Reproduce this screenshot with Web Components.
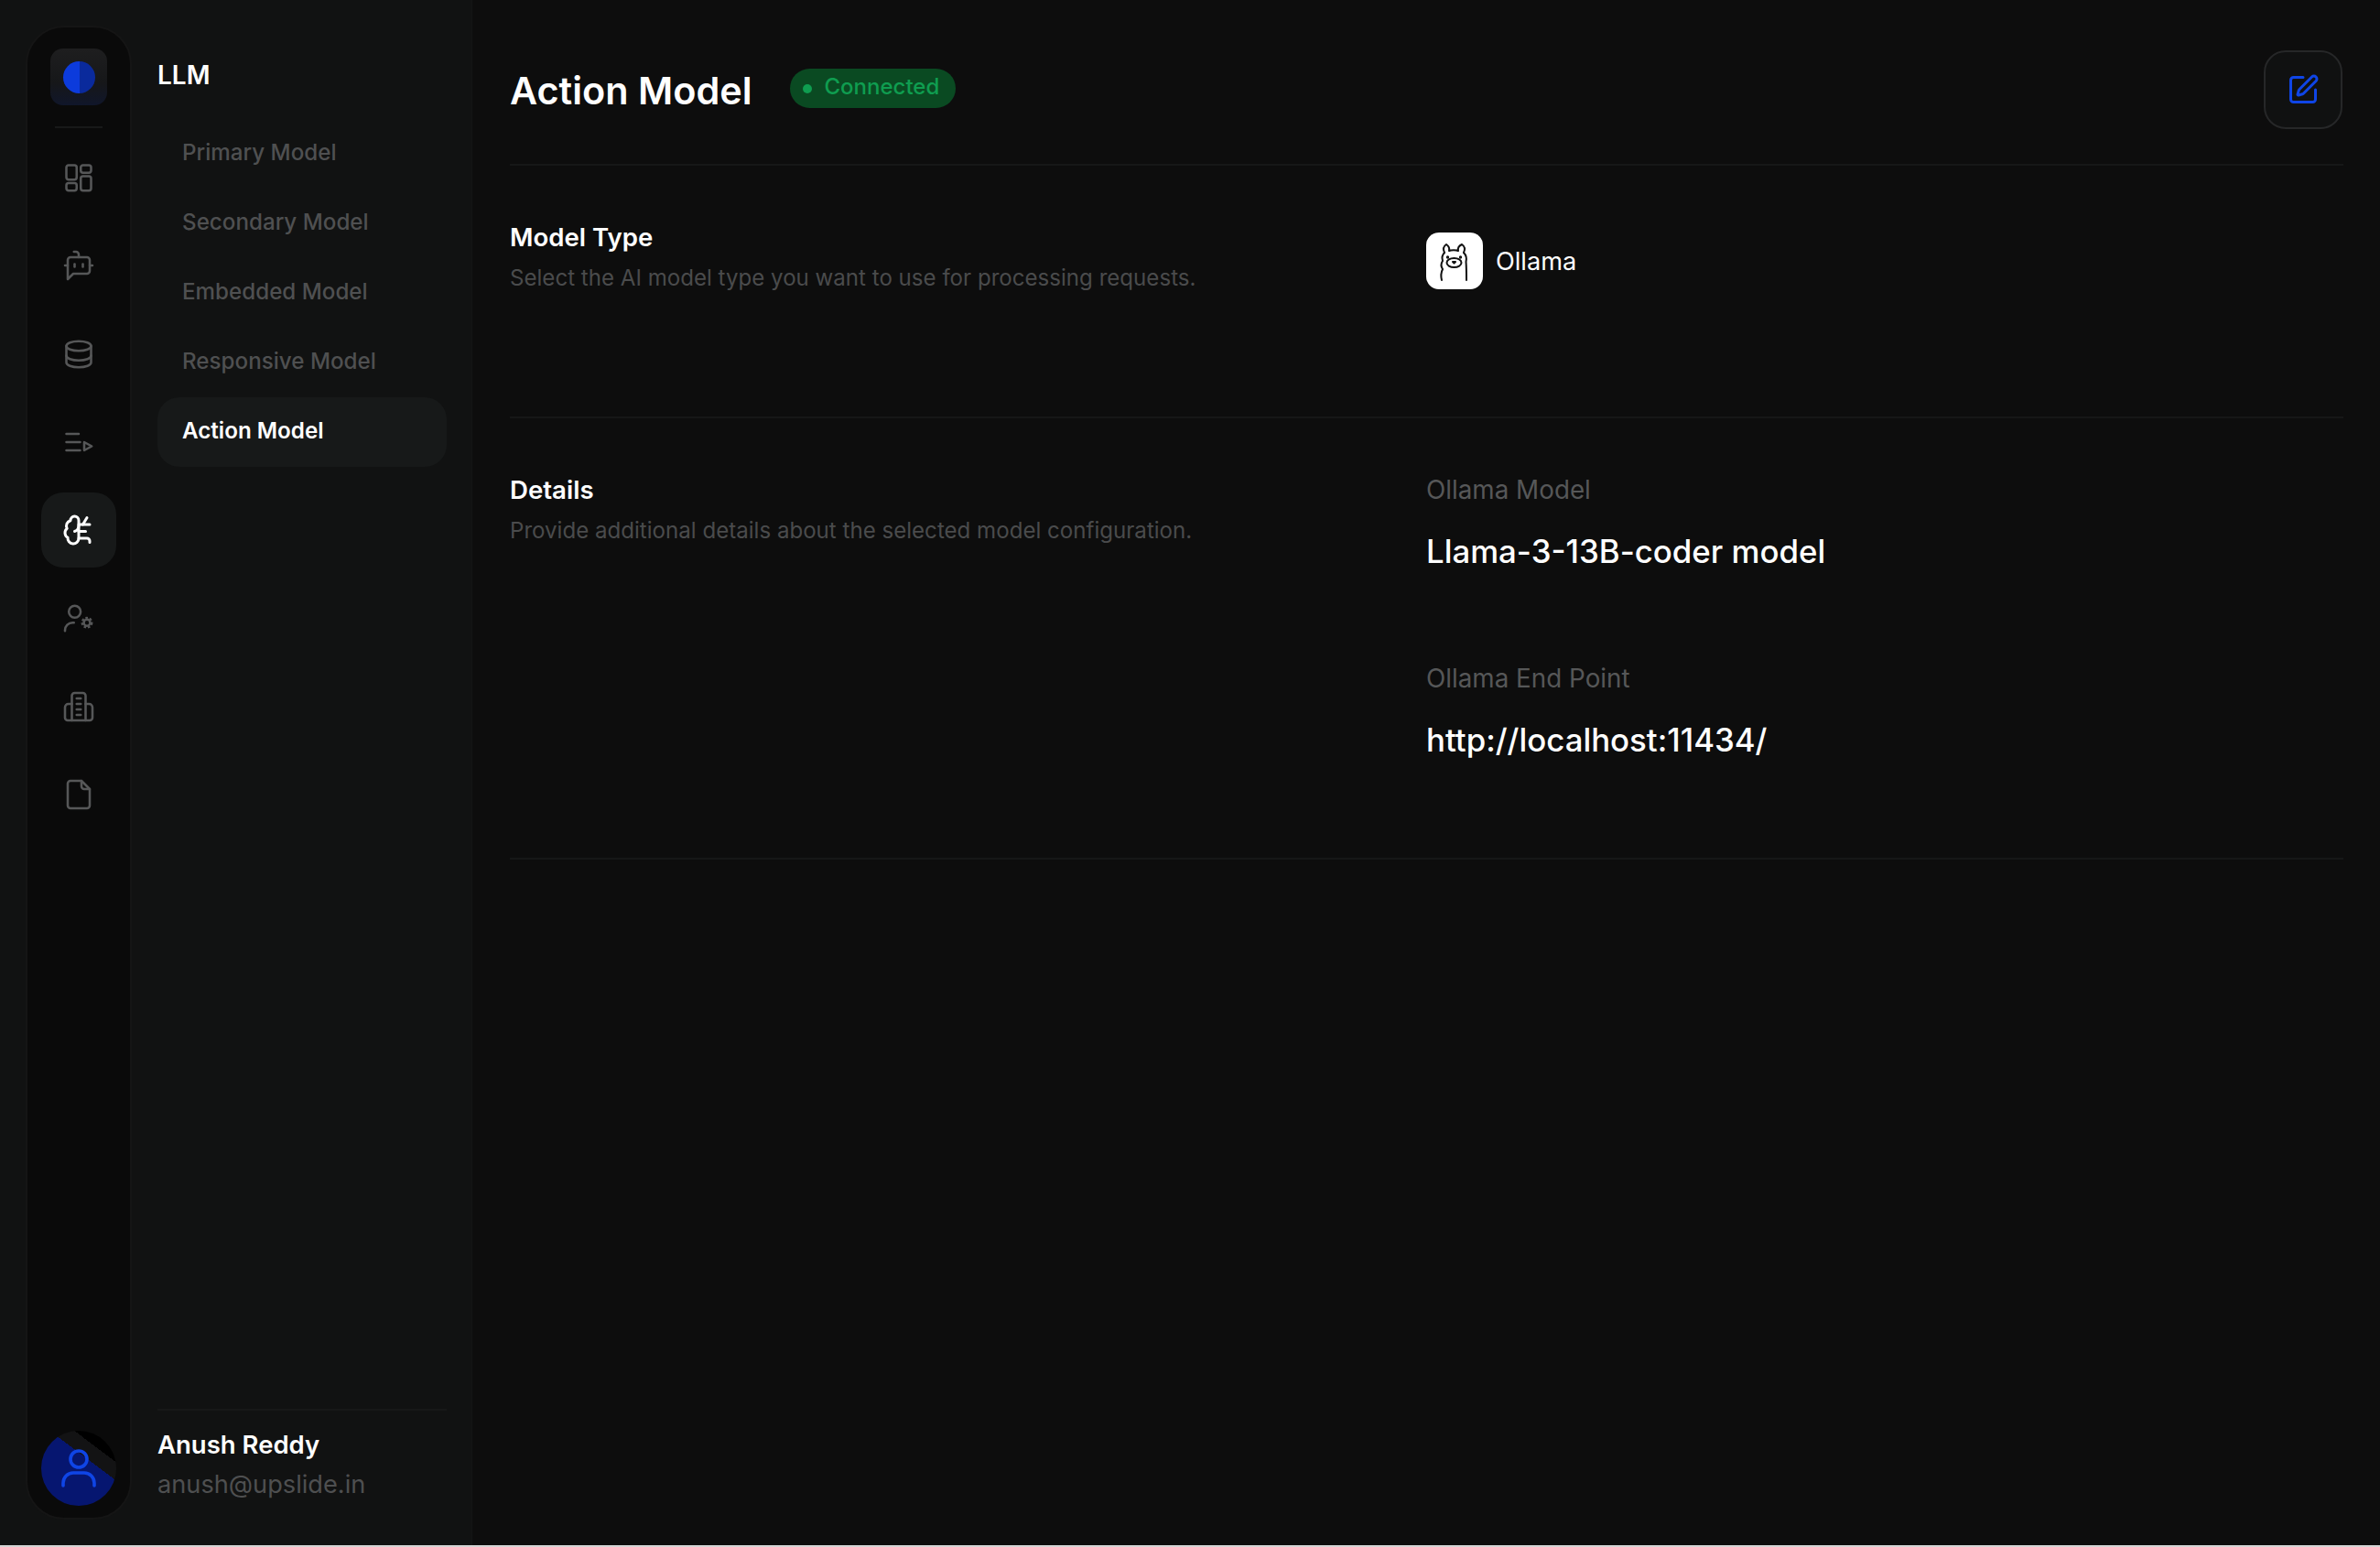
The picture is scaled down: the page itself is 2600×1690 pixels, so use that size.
<!DOCTYPE html>
<html>
<head>
<meta charset="utf-8">
<title>Action Model</title>
<style>
  html, body { margin: 0; height: 100%; background: #0d0d0d; }
  body { font-family: Inter, "Liberation Sans", sans-serif; color: #fff; }
</style>
</head>
<body>
<app-shell>
  <nav-rail slot="rail">
    <rail-item icon="grid"></rail-item>
    <rail-item icon="bot"></rail-item>
    <rail-item icon="database"></rail-item>
    <rail-item icon="list"></rail-item>
    <rail-item icon="brain" active></rail-item>
    <rail-item icon="usercog"></rail-item>
    <rail-item icon="building"></rail-item>
    <rail-item icon="file"></rail-item>
  </nav-rail>
  <sub-nav slot="subnav" heading="LLM" name="Anush Reddy" email="anush@upslide.in">
    <nav-link>Primary Model</nav-link>
    <nav-link>Secondary Model</nav-link>
    <nav-link>Embedded Model</nav-link>
    <nav-link>Responsive Model</nav-link>
    <nav-link active>Action Model</nav-link>
  </sub-nav>
  <page-header heading="Action Model" status="Connected"></page-header>
  <config-section heading="Model Type" desc="Select the AI model type you want to use for processing requests." style="height:276px">
    <model-chip>Ollama</model-chip>
  </config-section>
  <config-section heading="Details" desc="Provide additional details about the selected model configuration." style="height:482px">
    <detail-field label="Ollama Model">Llama-3-13B-coder model</detail-field>
    <detail-field label="Ollama End Point">http://localhost:11434/</detail-field>
  </config-section>
</app-shell>

<script>
const ICONS = {
  grid: '<rect x="3" y="3" width="7.5" height="10.5" rx="1.6"/><rect x="13.5" y="3" width="7.5" height="5.5" rx="1.6"/><rect x="3" y="16" width="7.5" height="5.5" rx="1.6"/><rect x="13.5" y="11" width="7.5" height="10.5" rx="1.6"/>',
  bot: '<path d="M12 6V4a2 2 0 0 0-2-2H8.500"/><path d="m8 18-4 4V8a2 2 0 0 1 2-2h12a2 2 0 0 1 2 2v8a2 2 0 0 1-2 2Z"/><path d="M2 12h2"/><path d="M9 11v2"/><path d="M15 11v2"/><path d="M20 12h2"/>',
  database: '<path d="M3 6c0-2 4-3.500 9-3.500s9 1.500 9 3.500-4 3.500-9 3.500S3 8 3 6Z"/><path d="M3 6v12c0 2 4 3.500 9 3.500s9-1.500 9-3.500V6"/><path d="M3 13c0 2 4 3.500 9 3.500s9-1.500 9-3.500"/>',
  list: '<path d="M3 6h9"/><path d="M3 12h10"/><path d="M3 18h10"/><path d="m16 12 5.500 3-5.500 3Z"/>',
  brain: '<path d="M12 5a3 3 0 1 0-5.997.125 4 4 0 0 0-2.526 5.770 4 4 0 0 0 .556 6.588A4 4 0 1 0 12 18Z"/><path d="M9 13a4.500 4.500 0 0 0 3-4"/><path d="M12 13h5"/><path d="M12 18h6a2 2 0 0 1 2 2v1"/><path d="M12 8h8"/><path d="M15 8l3-5"/>',
  usercog: '<circle cx="9.100" cy="7.500" r="4.300"/><path d="M2 21.500V21a5.500 5.500 0 0 1 5.500-5.500h1"/><circle cx="18" cy="15.500" r="2.300"/><circle cx="18" cy="15.500" r="3.500" stroke-width="1.600" stroke-linecap="butt" stroke-dasharray="1.700 1.300"/>',
  building: '<path d="M7 22V4a2 2 0 0 1 2-2h6a2 2 0 0 1 2 2v18"/><path d="M7 10H4.500A2.500 2.500 0 0 0 2 12.500V20a2 2 0 0 0 2 2h16a2 2 0 0 0 2-2v-7.500A2.500 2.500 0 0 0 19.500 10H17"/><path d="M10.500 6h3M10.500 10h3M10.500 14h3M10.500 18h3"/>',
  file: '<path d="M14 2H6a2 2 0 0 0-2 2v16a2 2 0 0 0 2 2h12a2 2 0 0 0 2-2V8Z"/><path d="M14 2v4a2 2 0 0 0 2 2h4"/>'
};

function svgIcon(name, size, stroke) {
  return `<svg width="${size}" height="${size}" viewBox="0 0 24 24" fill="none" stroke="currentColor" stroke-width="${stroke}" stroke-linecap="round" stroke-linejoin="round">${ICONS[name]}</svg>`;
}

class AppShell extends HTMLElement {
  constructor() {
    super();
    this.attachShadow({mode: 'open'}).innerHTML = `
      <style>
        :host { display: block; width: 2600px; height: 1690px; overflow: hidden; background: #0d0d0d; position: relative; }
        .frame { display: flex; height: 1688px; }
        .side { display: flex; flex: 0 0 516px; background: #111212; box-sizing: border-box; border-right: 1px solid #141515; }
        .main { flex: 1; padding: 0 40px 0 41px; min-width: 0; }
        .edge { height: 2px; background: #d4d4d4; }
      </style>
      <div class="frame">
        <div class="side">
          <slot name="rail"></slot>
          <slot name="subnav"></slot>
        </div>
        <div class="main"><slot></slot></div>
      </div>
      <div class="edge"></div>
    `;
  }
}

class NavRail extends HTMLElement {
  constructor() {
    super();
    this.attachShadow({mode: 'open'}).innerHTML = `
      <style>
        :host { display: flex; flex-direction: column; align-items: center; box-sizing: border-box; width: 116px; height: 1632px; margin: 28px 0 0 28px; padding: 23px 0 13px; background: #0a0a0a; border: 2px solid #151515; border-radius: 42px; }
        .logo { width: 62px; height: 62px; border-radius: 14px; background: linear-gradient(180deg, #1e1e1f 0%, #161719 60%, #10162a 100%); display: flex; align-items: center; justify-content: center; }
        .dot { width: 35px; height: 35px; border-radius: 50%; background: linear-gradient(90deg, #0c3bdc 0 50%, #0a2a9c 50% 100%); }
        hr { width: 52px; height: 2px; border: 0; background: #181919; margin: 23px 0 13px; flex: none; }
        .items { display: flex; flex-direction: column; gap: 14.3px; }
        .avatar { margin-top: auto; width: 82px; height: 82px; border-radius: 50%; overflow: hidden; color: #0f45e6;
          background: linear-gradient(217deg, #000 0 24%, #131314 24% 38%, #061670 38% 100%); }
      </style>
      <div class="logo"><div class="dot"></div></div>
      <hr>
      <div class="items"><slot></slot></div>
      <div class="avatar">
        <svg width="82" height="82" viewBox="0 0 82 82" fill="none" stroke="currentColor" stroke-width="3.600" stroke-linecap="round" stroke-linejoin="round">
          <circle cx="41" cy="31" r="9"/><path d="M24 60v-3a11 11 0 0 1 11-11h12a11 11 0 0 1 11 11v3"/>
        </svg>
      </div>
    `;
  }
}

class RailItem extends HTMLElement {
  constructor() {
    super();
    const active = this.hasAttribute('active');
    this.attachShadow({mode: 'open'}).innerHTML = `
      <style>
        :host { display: flex; align-items: center; justify-content: center; width: 82px; height: 82px; border-radius: 24px; color: #565758; }
        :host([active]) { background: #171919; color: #fff; }
      </style>
      ${svgIcon(this.getAttribute('icon'), 36, active ? 2 : 1.7)}
    `;
  }
}

class SubNav extends HTMLElement {
  constructor() {
    super();
    this.attachShadow({mode: 'open'}).innerHTML = `
      <style>
        :host { display: flex; flex-direction: column; box-sizing: border-box; width: 316px; height: 1688px; margin-left: 28px; }
        h2 { margin: 62px 0 29px; font-size: 28px; line-height: 40px; font-weight: 600; color: #fff; }
        .links { display: flex; flex-direction: column; flex: 1; }
        .user { border-top: 2px solid #171818; padding-top: 17px; height: 130px; box-sizing: border-box; margin-bottom: 19px; }
        .name { font-size: 27.500px; line-height: 40px; font-weight: 600; color: #fff; }
        .email { font-size: 27.200px; line-height: 40px; margin-top: 4px; color: #4e4f50; }
      </style>
      <h2>${this.getAttribute('heading')}</h2>
      <div class="links"><slot></slot></div>
      <div class="user">
        <div class="name">${this.getAttribute('name')}</div>
        <div class="email">${this.getAttribute('email')}</div>
      </div>
    `;
  }
}

class NavLink extends HTMLElement {
  constructor() {
    super();
    this.attachShadow({mode: 'open'}).innerHTML = `
      <style>
        :host { display: flex; align-items: center; height: 75.800px; box-sizing: border-box; padding: 0 0 4px 27px; border-radius: 24px; font-size: 24.200px; font-weight: 500; color: #4f5051; }
        :host([active]) { background: #171919; color: #fff; font-weight: 600; }
      </style>
      <slot></slot>
    `;
  }
}

class PageHeader extends HTMLElement {
  constructor() {
    super();
    this.attachShadow({mode: 'open'}).innerHTML = `
      <style>
        :host { display: flex; align-items: center; box-sizing: border-box; height: 181px; padding-top: 16px; border-bottom: 2px solid #161717; }
        h1 { margin: 2px 41px 0 0; font-size: 41.400px; line-height: 56px; font-weight: 600; color: #fff; }
        .badge { display: flex; align-items: center; gap: 14px; height: 43px; box-sizing: border-box; padding: 0 18px 4px 14px; margin-bottom: 2px; border-radius: 22px; background: #0a4a22; color: #0f9d50; font-size: 24px; font-weight: 500; }
        .badge i { width: 10px; height: 10px; border-radius: 50%; background: #0f9d50; margin-top: 4px; }
        button { margin-left: auto; width: 86px; height: 86px; padding: 0; display: flex; align-items: center; justify-content: center; background: #101111; border: 2px solid #262728; border-radius: 24px; color: #0f45e6; margin-right: 1px; }
      </style>
      <h1>${this.getAttribute('heading')}</h1>
      <span class="badge"><i></i>${this.getAttribute('status')}</span>
      <button>
        <svg width="36" height="36" viewBox="0 0 24 24" fill="none" stroke="currentColor" stroke-width="2" stroke-linecap="round" stroke-linejoin="round">
          <path d="M12 3H5a2 2 0 0 0-2 2v14a2 2 0 0 0 2 2h14a2 2 0 0 0 2-2v-7"/>
          <path d="M18.375 2.625a1 1 0 0 1 3 3l-9.013 9.014a2 2 0 0 1-.853.505l-2.873.840a.5.5 0 0 1-.620-.620l.840-2.873a2 2 0 0 1 .506-.852z"/>
        </svg>
      </button>
    `;
  }
}

class ConfigSection extends HTMLElement {
  constructor() {
    super();
    this.attachShadow({mode: 'open'}).innerHTML = `
      <style>
        :host { display: grid; grid-template-columns: 1001px 1fr; box-sizing: border-box; padding-top: 59px; border-bottom: 2px solid #161717; }
        h3 { margin: 0; font-size: 27.600px; line-height: 38px; font-weight: 600; color: #fff; }
        p { margin: 8px 0 0; font-size: 24.100px; line-height: 36px; color: #4a4b4c; }
        .right { display: flex; flex-direction: column; gap: 100px; }
      </style>
      <div>
        <h3>${this.getAttribute('heading')}</h3>
        <p>${this.getAttribute('desc')}</p>
      </div>
      <div class="right"><slot></slot></div>
    `;
  }
}

class ModelChip extends HTMLElement {
  constructor() {
    super();
    this.attachShadow({mode: 'open'}).innerHTML = `
      <style>
        :host { display: flex; align-items: center; gap: 14px; margin-top: 14px; font-size: 27.200px; color: #fff; }
        .tile { width: 62px; height: 62px; border-radius: 14px; background: #fff; flex: none; }
      </style>
      <div class="tile">
        <svg width="62" height="62" viewBox="0 0 62 62" fill="none" stroke="#111" stroke-width="2" stroke-linecap="round" stroke-linejoin="round">
          <path d="M20 22C18 18 19 15 22 13c3 2 3.500 5 3 7 2-1 8-1 10 0-.5-2 0-5 4-7 3 2 4 5 2 9"/>
          <path d="M20 22c-3 3-3 6-2 9-2 3-2 6 0 9-2 4-2 8-1 12"/>
          <path d="M41 22c3 3 3.500 6 2.500 10 .5 6 .5 14 .5 20"/>
          <ellipse cx="30.500" cy="33" rx="8" ry="5"/>
          <path d="M29 32h3l-1.500 1.500Z" fill="#111"/>
          <circle cx="23.500" cy="27" r=".7" fill="#111"/><circle cx="37.500" cy="27" r=".7" fill="#111"/>
        </svg>
      </div>
      <slot></slot>
    `;
  }
}

class DetailField extends HTMLElement {
  constructor() {
    super();
    this.attachShadow({mode: 'open'}).innerHTML = `
      <style>
        :host { display: block; }
        .label { font-size: 27.800px; line-height: 38px; color: #565758; }
        .value { margin-top: 28px; font-size: 34.800px; line-height: 40px; font-weight: 500; color: #fff; }
      </style>
      <div class="label">${this.getAttribute('label')}</div>
      <div class="value"><slot></slot></div>
    `;
  }
}

customElements.define('app-shell', AppShell);
customElements.define('nav-rail', NavRail);
customElements.define('rail-item', RailItem);
customElements.define('sub-nav', SubNav);
customElements.define('nav-link', NavLink);
customElements.define('page-header', PageHeader);
customElements.define('config-section', ConfigSection);
customElements.define('model-chip', ModelChip);
customElements.define('detail-field', DetailField);
</script>
</body>
</html>
